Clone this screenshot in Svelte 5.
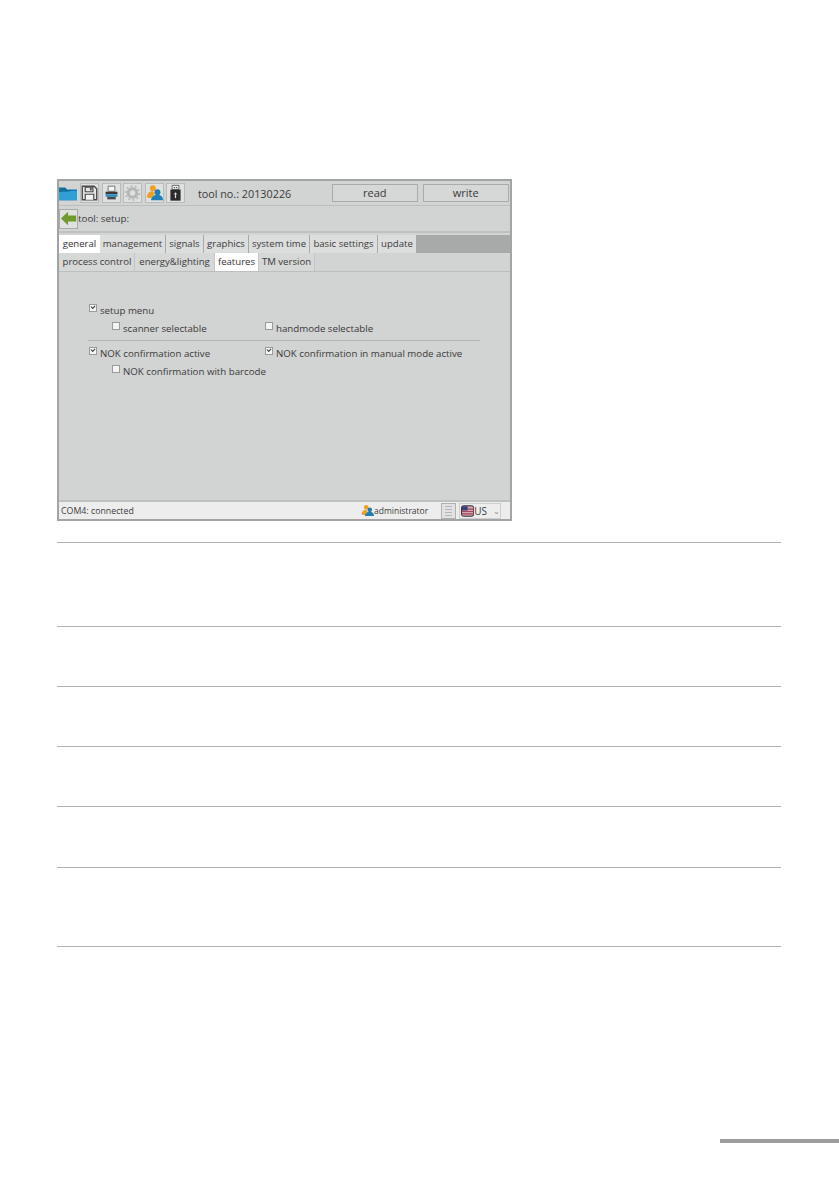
<script>
  const tabs = [
    { label: 'general', w: 41, active: true },
    { label: 'management', w: 65 },
    { label: 'signals', w: 37 },
    { label: 'graphics', w: 44 },
    { label: 'system time', w: 60 },
    { label: 'basic settings', w: 67 },
    { label: 'update', w: 38 },
  ]
  const subTabs = [
    { label: 'process control', w: 75 },
    { label: 'energy&lighting', w: 80 },
    { label: 'features', w: 44, active: true },
    { label: 'TM version', w: 56 },
  ]
  const rowHeights = [84, 60, 60, 60, 61, 79]
</script>

<div class="page">
  <div class="window">
    <div class="toolbar">
      <div class="tool-btn">
        <svg viewBox="0 0 20 20"><path d="M0 4h7l2 2h11v12H0z" fill="#12709f" /><path d="M0 9c5-1 8 0 12-1 3-.6 6-.6 8-.4V18H0z" fill="#2f9fd6" /></svg>
      </div>
      <div class="tool-btn">
        <svg viewBox="0 0 20 20"><path d="M1.500 2h14l3 3v13h-17z" fill="#e6e6e6" stroke="#4a4a4a" stroke-width="1.600" /><path d="M5 3h9v5.500H5z" fill="none" stroke="#4a4a4a" stroke-width="1.400" /><path d="M10.500 4h2v3h-2z" fill="#4a4a4a" /><path d="M5 18v-6.500h10V18" fill="#f2f2f2" stroke="#4a4a4a" stroke-width="1.400" /></svg>
      </div>
      <div class="tool-btn">
        <svg viewBox="0 0 20 20"><path d="M6 2h8v6H6z" fill="#f5f5f5" stroke="#666" /><path d="M3 8.500h14v3H3z" fill="#3a3a3a" /><path d="M3 11.500h14v3H3z" fill="#2a8fc4" /><path d="M5 14.500h10v3H5z" fill="#4a4a4a" /></svg>
      </div>
      <div class="tool-btn">
        <svg viewBox="0 0 20 20"><circle cx="10" cy="10" r="5" fill="none" stroke="#b5b5b5" stroke-width="3.500" /><circle cx="10" cy="10" r="8" fill="none" stroke="#bdbdbd" stroke-width="2.500" stroke-dasharray="2.500 2.500" /></svg>
      </div>
      <div class="tool-btn">
        <svg viewBox="0 0 20 20"><circle cx="8" cy="4.500" r="3.500" fill="#f0a020" /><path d="M1 14c1-5 4-6 7-6l2 3-4 5H2z" fill="#f0a020" /><circle cx="13.500" cy="9" r="3.500" fill="#1d7fb5" /><path d="M6 18.500c0-4 3-6.500 7.500-6.500s6.500 3 6.500 6.500z" fill="#1d7fb5" /></svg>
      </div>
      <div class="tool-btn">
        <svg viewBox="0 0 20 20"><path d="M6 1h8v5H6z" fill="#f0f0f0" stroke="#555" /><path d="M8 3h1.500v1.500H8zM10.500 3H12v1.500h-1.500z" fill="#555" /><path d="M4 6h12v13H4z" fill="#2b2b2b" /><path d="M9.300 11h1.400v5H9.300z" fill="#ddd" /><path d="M8 11.500l2-2.500 2 2.500z" fill="#ddd" /></svg>
      </div>
      <span class="tool-no">tool no.: 20130226</span>
      <button class="action">read</button>
      <button class="action">write</button>
    </div>

    <div class="crumb">
      <div class="back-btn">
        <svg viewBox="0 0 20 20"><path d="M1 10l8.500-8v4.500H19v7H9.500V18z" fill="#6f9a2c" /></svg>
      </div>
      <span>tool: setup:</span>
    </div>

    <div class="tabs">
      {#each tabs as tab}
        <div class="tab" class:active={tab.active} style:width="{tab.w}px">{tab.label}</div>
      {/each}
    </div>
    <div class="sub-tabs">
      {#each subTabs as tab}
        <div class="tab" class:active={tab.active} style:width="{tab.w}px">{tab.label}</div>
      {/each}
    </div>

    <div class="content">
      <div class="opt"><span class="box checked"></span>setup menu</div>
      <div class="opt-row sub">
        <div class="opt col"><span class="box"></span>scanner selectable</div>
        <div class="opt"><span class="box"></span>handmode selectable</div>
      </div>
      <div class="divider"></div>
      <div class="opt-row">
        <div class="opt col-wide"><span class="box checked"></span>NOK confirmation active</div>
        <div class="opt"><span class="box checked"></span>NOK confirmation in manual mode active</div>
      </div>
      <div class="opt last sub"><span class="box"></span>NOK confirmation with barcode</div>
    </div>

    <div class="status">
      <span class="com">COM4: connected</span>
      <svg class="user" viewBox="0 0 20 20"><circle cx="8" cy="5" r="3.500" fill="#f0a020" /><path d="M1 15c1-5 4-6 7-6l2 3-4 5H2z" fill="#f0a020" /><circle cx="13.500" cy="9" r="3.500" fill="#1d7fb5" /><path d="M6 18.500c0-4 3-6.500 7.500-6.500s6.500 3 6.500 6.500z" fill="#1d7fb5" /></svg>
      <span class="admin">administrator</span>
      <div class="note"><i></i><i></i><i></i><i></i></div>
      <div class="lang">
        <svg viewBox="0 0 14 12"><rect x="0.500" y="0.500" width="13" height="11" rx="2" fill="#cfa9b0" stroke="#222" /><path d="M1 4h12M1 6.500h12M1 9h12" stroke="#b0435a" stroke-width="1.200" /><rect x="1" y="1" width="6" height="4.500" fill="#3c3f78" /></svg>
        <span>US</span>
        <b>⌄</b>
      </div>
    </div>
  </div>

  <div class="rows">
    {#each rowHeights as h}
      <div class="row" style:height="{h}px"></div>
    {/each}
  </div>

  <div class="more"></div>
</div>

<style>
  :global(body) {
    margin: 0;
    background: #fff;
  }
  .page {
    height: 1191px;
    padding: 179px 0 0 57px;
    box-sizing: border-box;
    font-family: "Open Sans", "Liberation Sans", sans-serif;
    font-size: 10px;
    color: #3c3c3c;
    overflow: hidden;
  }
  .window {
    width: 455px;
    height: 342px;
    box-sizing: border-box;
    border: 2px solid #a3a5a5;
    background: #d2d3d3;
    display: flex;
    flex-direction: column;
  }
  .toolbar {
    height: 25px;
    display: flex;
    align-items: center;
    gap: 2.500px;
    padding: 0 1px 0 0;
    box-sizing: border-box;
    border-bottom: 1px solid #bcbdbd;
  }
  .tool-btn {
    width: 19px;
    height: 20px;
    box-sizing: border-box;
    border: 1px solid #b9baba;
    background: #dfe0e0;
    display: flex;
    align-items: center;
    justify-content: center;
  }
  .tool-btn svg { width: 18px; height: 18px; }
  .tool-btn:first-child { border: 0; background: none; }
  .tool-no {
    margin-left: 10px;
    width: 132px;
    font-size: 10.800px;
    color: #3a3a3a;
  }
  .action {
    width: 87px;
    height: 18px;
    margin-right: 2px;
    padding: 0;
    border: 1px solid #a9abab;
    background: #d6d7d7;
    font: inherit;
    font-size: 11px;
    color: #3a3a3a;
    line-height: 14px;
  }
  .action:last-child { margin-right: 0; }
  .crumb {
    height: 27px;
    display: flex;
    align-items: center;
    gap: 0;
    box-sizing: border-box;
    border-bottom: 2px solid #bfc0c0;
    font-size: 9.800px;
  }
  .back-btn {
    width: 19px;
    height: 20px;
    box-sizing: border-box;
    border: 1px solid #a9abab;
    background: #dfe0e0;
    display: flex;
    align-items: center;
    justify-content: center;
  }
  .back-btn svg { width: 17px; height: 17px; }
  .tabs {
    margin-top: 2px;
    height: 18px;
    display: flex;
    background: #a8a9a9;
  }
  .sub-tabs {
    height: 19px;
    display: flex;
    padding-left: 1px;
    box-sizing: border-box;
    border-bottom: 1px solid #bdbebe;
  }
  .tab {
    flex: none;
    box-sizing: border-box;
    margin-right: 1px;
    text-align: center;
    line-height: 17px;
    background: #dcdddd;
    white-space: nowrap;
    font-size: 9.600px;
  }
  .tabs .tab:first-child { margin-right: 0; }
  .sub-tabs .tab { margin-right: 0; background: #d6d7d7; border-right: 1px solid #c4c5c5; }
  .tab.active { background: #fff; color: #333; }
  .content {
    flex: 1;
    padding: 31px 0 0 30px;
    border-bottom: 2px solid #bfc0c0;
    min-height: 0;
  }
  .opt {
    display: flex;
    align-items: center;
    height: 14px;
    white-space: nowrap;
    font-size: 9.700px;
    color: #3a3a3a;
  }
  .box {
    width: 6px;
    height: 6px;
    border: 1px solid #9a9a9a;
    background: #f4f4f4;
    margin-right: 3px;
    margin-top: -4px;
    flex: none;
    position: relative;
  }
  .box.checked::after {
    content: '';
    position: absolute;
    left: 1px;
    top: 0;
    width: 3px;
    height: 2px;
    border-left: 1.200px solid #333;
    border-bottom: 1.200px solid #333;
    transform: rotate(-45deg);
  }
  .opt-row {
    display: flex;
    margin-top: 4px;
  }
  .opt-row.sub { padding-left: 23px; margin-top: 4px; }
  .col { width: 153px; }
  .col-wide { width: 176px; }
  .last.sub { padding-left: 23px; margin-top: 4px; }
  .divider {
    height: 1px;
    width: 392px;
    margin: 5px 0 5px -1px;
    background: #b4b5b5;
  }
  .status {
    height: 17px;
    flex: none;
    background: #ededed;
    display: flex;
    align-items: center;
    padding-left: 2px;
    font-size: 8.800px;
  }
  .com { width: 300px; }
  .user { width: 13px; height: 13px; }
  .admin { width: 67px; font-size: 8.500px; }
  .note {
    width: 15px;
    height: 16px;
    box-sizing: border-box;
    border: 1px solid #b0b1b1;
    background: #e2e2e2;
    display: flex;
    flex-direction: column;
    justify-content: center;
    gap: 2px;
    padding: 0 3px;
  }
  .note i { height: 1px; background: #b4b5b5; }
  .lang {
    margin-left: 3px;
    width: 42px;
    height: 16px;
    box-sizing: border-box;
    border: 1px solid #cfcfcf;
    display: flex;
    align-items: center;
    padding-left: 1px;
    gap: 0;
  }
  .lang svg { width: 14px; height: 12px; }
  .lang span { font-size: 10px; }
  .lang b { margin-left: 6px; font-size: 8px; font-weight: 400; color: #888; line-height: 8px; }
  .rows {
    margin-top: 21px;
    width: 724px;
    border-top: 1px solid #b2b2b2;
  }
  .row {
    box-sizing: border-box;
    border-bottom: 1px solid #b2b2b2;
  }
  .more {
    width: 119px;
    height: 4px;
    margin: 192px 0 0 663px;
    background: #9d9d9d;
  }
</style>
